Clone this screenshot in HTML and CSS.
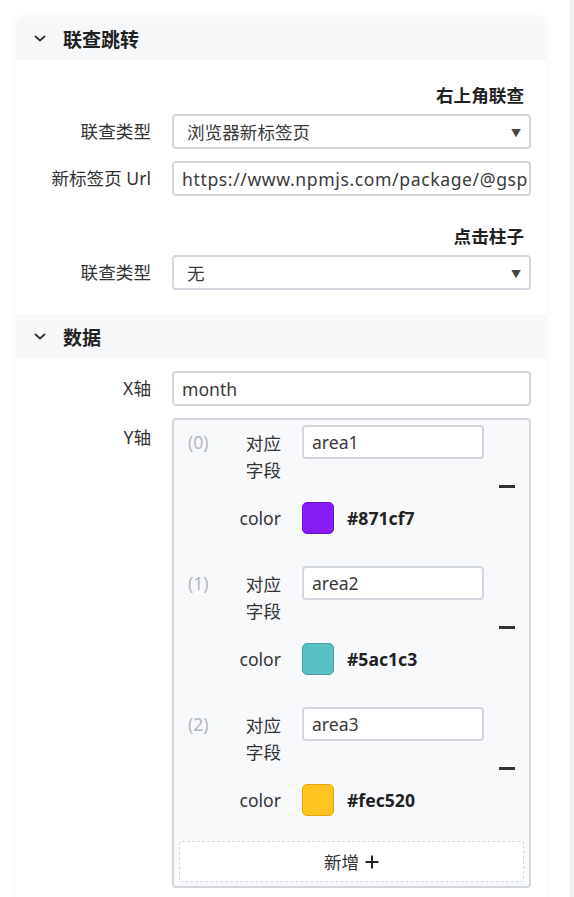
FILE: index.html
```html
<!DOCTYPE html>
<html lang="zh">
<head>
<meta charset="utf-8">
<link rel="stylesheet" href="styles.css">
</head>
<body>
<div class="page">
  <div class="content">
    <div class="card">
      <div class="sec-head">
        <svg class="chev" width="14" height="9" viewBox="0 0 14 9"><path d="M2 2 L7 6.5 L12 2" fill="none" stroke="#333" stroke-width="1.8"/></svg>
        <span class="sec-title">联查跳转</span>
      </div>
      <div class="sec-body sec-body-1">
        <div class="subtitle">右上角联查</div>
        <div class="row">
          <div class="label">联查类型</div>
          <div class="field select"><span class="val">浏览器新标签页</span><span class="arrow">▼</span></div>
        </div>
        <div class="row row-gap">
          <div class="label">新标签页 Url</div>
          <div class="field"><span class="val url">https://www.npmjs.com/package/@gsp</span></div>
        </div>
        <div class="subtitle subtitle-2">点击柱子</div>
        <div class="row">
          <div class="label">联查类型</div>
          <div class="field select"><span class="val">无</span><span class="arrow">▼</span></div>
        </div>
      </div>
      <div class="sec-head">
        <svg class="chev" width="14" height="9" viewBox="0 0 14 9"><path d="M2 2 L7 6.5 L12 2" fill="none" stroke="#333" stroke-width="1.8"/></svg>
        <span class="sec-title">数据</span>
      </div>
      <div class="sec-body sec-body-2">
        <div class="row">
          <div class="label">X轴</div>
          <div class="field field-plain"><span class="val">month</span></div>
        </div>
        <div class="row row-y">
          <div class="label label-y">Y轴</div>
          <div class="ybox">
            <div class="item">
              <div class="idx">(0)</div>
              <div class="ilabel">对应字段</div>
              <div class="field small"><span class="val">area1</span></div>
              <div class="minus"></div>
              <div class="ilabel color-label">color</div>
              <div class="color-val"><span class="swatch sw-purple"></span><span class="hex">#871cf7</span></div>
            </div>
            <div class="item">
              <div class="idx">(1)</div>
              <div class="ilabel">对应字段</div>
              <div class="field small"><span class="val">area2</span></div>
              <div class="minus"></div>
              <div class="ilabel color-label">color</div>
              <div class="color-val"><span class="swatch sw-teal"></span><span class="hex">#5ac1c3</span></div>
            </div>
            <div class="item">
              <div class="idx">(2)</div>
              <div class="ilabel">对应字段</div>
              <div class="field small"><span class="val">area3</span></div>
              <div class="minus"></div>
              <div class="ilabel color-label">color</div>
              <div class="color-val"><span class="swatch sw-yellow"></span><span class="hex">#fec520</span></div>
            </div>
            <div class="add-btn">新增 <svg class="plus" width="14" height="14" viewBox="0 0 14 14"><path d="M7 0.5 V13.5 M0.5 7 H13.5" stroke="#222" stroke-width="2" fill="none"/></svg></div>
          </div>
        </div>
      </div>
    </div>
  </div>
  <div class="scroll"></div>
</div>
</body>
</html>
```

FILE: styles.css
```css
* { box-sizing: border-box; }
html, body { margin: 0; padding: 0; background: #fff; }
body {
  font-family: "Noto Sans", "Noto Sans CJK SC", sans-serif;
  font-size: 17.6px;
  color: #333;
  height: 897px;
  overflow: hidden;
}
.page { display: flex; height: 897px; }
.content { flex: 1; padding: 17px 24px 0 16px; }
.scroll { width: 4px; background: #f1f2f5; }

.card {
  background: #fff;
  border-radius: 6px 6px 0 0;
  box-shadow: 0 0 10px rgba(0, 0, 0, 0.04);
  height: 900px;
}
.sec-head {
  height: 43px;
  background: #f7f8fa;
  display: flex;
  align-items: center;
  padding-left: 17px;
}
.sec-head:first-child { border-radius: 6px 6px 0 0; }
.chev { margin-right: 16px; }
.sec-title {
  font-family: "Noto Sans CJK SC", sans-serif;
  font-weight: 700;
  font-size: 19px;
  color: #222;
}
.sec-body { padding-right: 15px; }
.sec-body-1 { padding-top: 22px; padding-bottom: 25px; }
.sec-body-2 { padding-top: 13px; }

.subtitle {
  font-family: "Noto Sans CJK SC", sans-serif;
  font-weight: 700;
  text-align: right;
  padding-right: 7px;
  line-height: 25px;
  margin-bottom: 7px;
  color: #222;
}
.subtitle-2 { margin-top: 27px; margin-bottom: 7px; }

.row {
  display: grid;
  grid-template-columns: 135px 359px;
  column-gap: 21px;
}
.row-gap { margin-top: 12px; }
.row-y { margin-top: 12px; }
.label {
  text-align: right;
  line-height: 35px;
  white-space: nowrap;
  color: #333;
}
.label-y { line-height: 38px; }

.field {
  height: 35px;
  border: 2px solid #d3d6dc;
  border-radius: 4px;
  background: #fff;
  display: flex;
  align-items: center;
  padding: 0 8px 0 8px;
  overflow: hidden;
  white-space: nowrap;
  position: relative;
}
.select { padding-left: 13px; }
.val { color: #3a3a3a; }
.url { letter-spacing: 0.6px; }
.arrow {
  position: absolute;
  right: 8px;
  top: 50%;
  transform: translateY(-50%);
  font-size: 10px;
  color: #444;
}

.ybox {
  border: 2px solid #d3d6dc;
  border-radius: 4px;
  background: #f8f9fb;
  padding: 5px 5px 4px 5px;
  height: 470px;
}
.item {
  display: grid;
  grid-template-columns: 43px 50px 203px 31px;
  grid-template-rows: auto auto;
  padding-left: 9px;
  padding-bottom: 16px;
  margin-bottom: 16px;
}
.item:nth-of-type(3) { margin-bottom: 9px; }
.idx {
  grid-row: 1;
  grid-column: 1;
  color: #b4b8bf;
  line-height: 34px;
}
.ilabel {
  grid-column: 2;
  text-align: right;
  line-height: 27px;
  padding-top: 4px;
  font-family: "Noto Sans CJK SC", sans-serif;
}
.item > .field.small {
  grid-column: 3;
  grid-row: 1;
  margin-left: 21px;
  width: 182px;
  height: 34px;
  align-self: start;
}
.minus {
  grid-column: 4;
  grid-row: 1 / span 2;
  align-self: center;
  justify-self: end;
  width: 16px;
  height: 2.5px;
  background: #333;
  margin-top: 14px;
}
.color-label {
  grid-row: 2;
  line-height: 32px;
  padding-top: 0;
  margin-top: 19px;
  font-family: "Noto Sans", sans-serif;
}
.color-val {
  grid-row: 2;
  grid-column: 3;
  margin-left: 21px;
  margin-top: 19px;
  display: flex;
  align-items: center;
}
.swatch {
  width: 32px;
  height: 32px;
  border-radius: 5px;
  border: 1.5px solid;
  margin-right: 13px;
}
.sw-purple { background: #871cf7; border-color: #6c15c8; }
.sw-teal { background: #5ac1c3; border-color: #3fa2a4; }
.sw-yellow { background: #fec520; border-color: #e0a70a; }
.hex { font-weight: 700; color: #222; }

.add-btn {
  height: 41px;
  border: 1.5px dashed #d3d6dc;
  border-radius: 3px;
  background: #fff;
  display: flex;
  align-items: center;
  justify-content: center;
  color: #333;
}
.plus { margin-left: 6px; }
```
